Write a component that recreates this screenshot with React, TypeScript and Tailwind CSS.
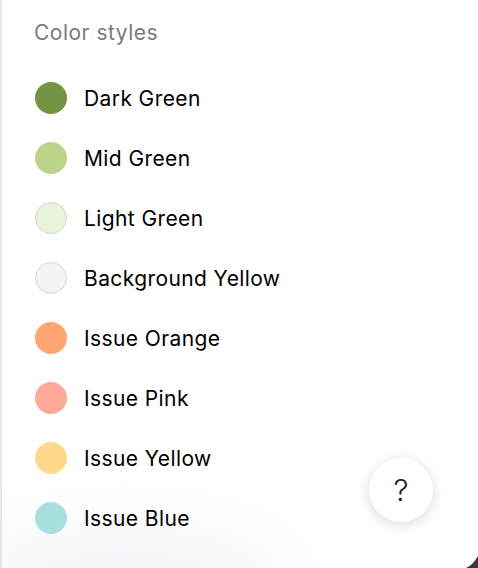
import { useState } from "react";

const swatches = [
  { name: "Dark Green", color: "bg-[#739442]", border: false },
  { name: "Mid Green", color: "bg-[#bcd38a]", border: false },
  { name: "Light Green", color: "bg-[#e8f3da]", border: true },
  { name: "Background Yellow", color: "bg-[#f4f4f0]", border: true },
  { name: "Issue Orange", color: "bg-[#ffa672]", border: false },
  { name: "Issue Pink", color: "bg-[#ffa99a]", border: false },
  { name: "Issue Yellow", color: "bg-[#ffd98a]", border: false },
  { name: "Issue Blue", color: "bg-[#a8e0df]", border: false },
];

export default function App() {
  const [helpOpen, setHelpOpen] = useState(false);

  return (
    <div className="relative h-[568px] w-[478px] overflow-hidden bg-white font-['Inter',sans-serif] text-black">
      {/* soft shadow at bottom left */}
      <div className="pointer-events-none absolute -bottom-[60px] -left-[40px] h-[90px] w-[330px] rounded-[50%] bg-gray-300/30 blur-2xl" />

      <div className="relative h-full border-l-2 border-[#e6e6e6] pl-[33px] pt-[19px]">
        <h2 className="-ml-px text-[21px] leading-[28px] tracking-[0.5px] text-[#7a7a7a]">Color styles</h2>

        <ul className="mt-[21px] flex flex-col">
          {swatches.map((s) => (
            <li key={s.name} className="flex h-[60px] items-center gap-[17px]">
              <span
                className={`h-[32px] w-[32px] shrink-0 rounded-full ${s.color} ${
                  s.border ? "border border-[#d6d6d0]" : ""
                }`}
              />
              <span className="text-[21px] leading-none tracking-[0.4px]">{s.name}</span>
            </li>
          ))}
        </ul>
      </div>

      <button
        type="button"
        onClick={() => setHelpOpen(!helpOpen)}
        className="absolute left-[369px] top-[458px] flex h-[64px] w-[64px] items-center justify-center rounded-full bg-white text-[30px] font-light text-[#222] shadow-[0_3px_14px_rgba(0,0,0,0.14)]"
      >
        ?
      </button>

      {/* dark corner */}
      <svg className="absolute bottom-0 right-0" width="12" height="12" viewBox="0 0 12 12">
        <path d="M12 0 L12 12 L0 12 Q7 9 12 0 Z" fill="#3a3a3a" />
      </svg>
    </div>
  );
}
